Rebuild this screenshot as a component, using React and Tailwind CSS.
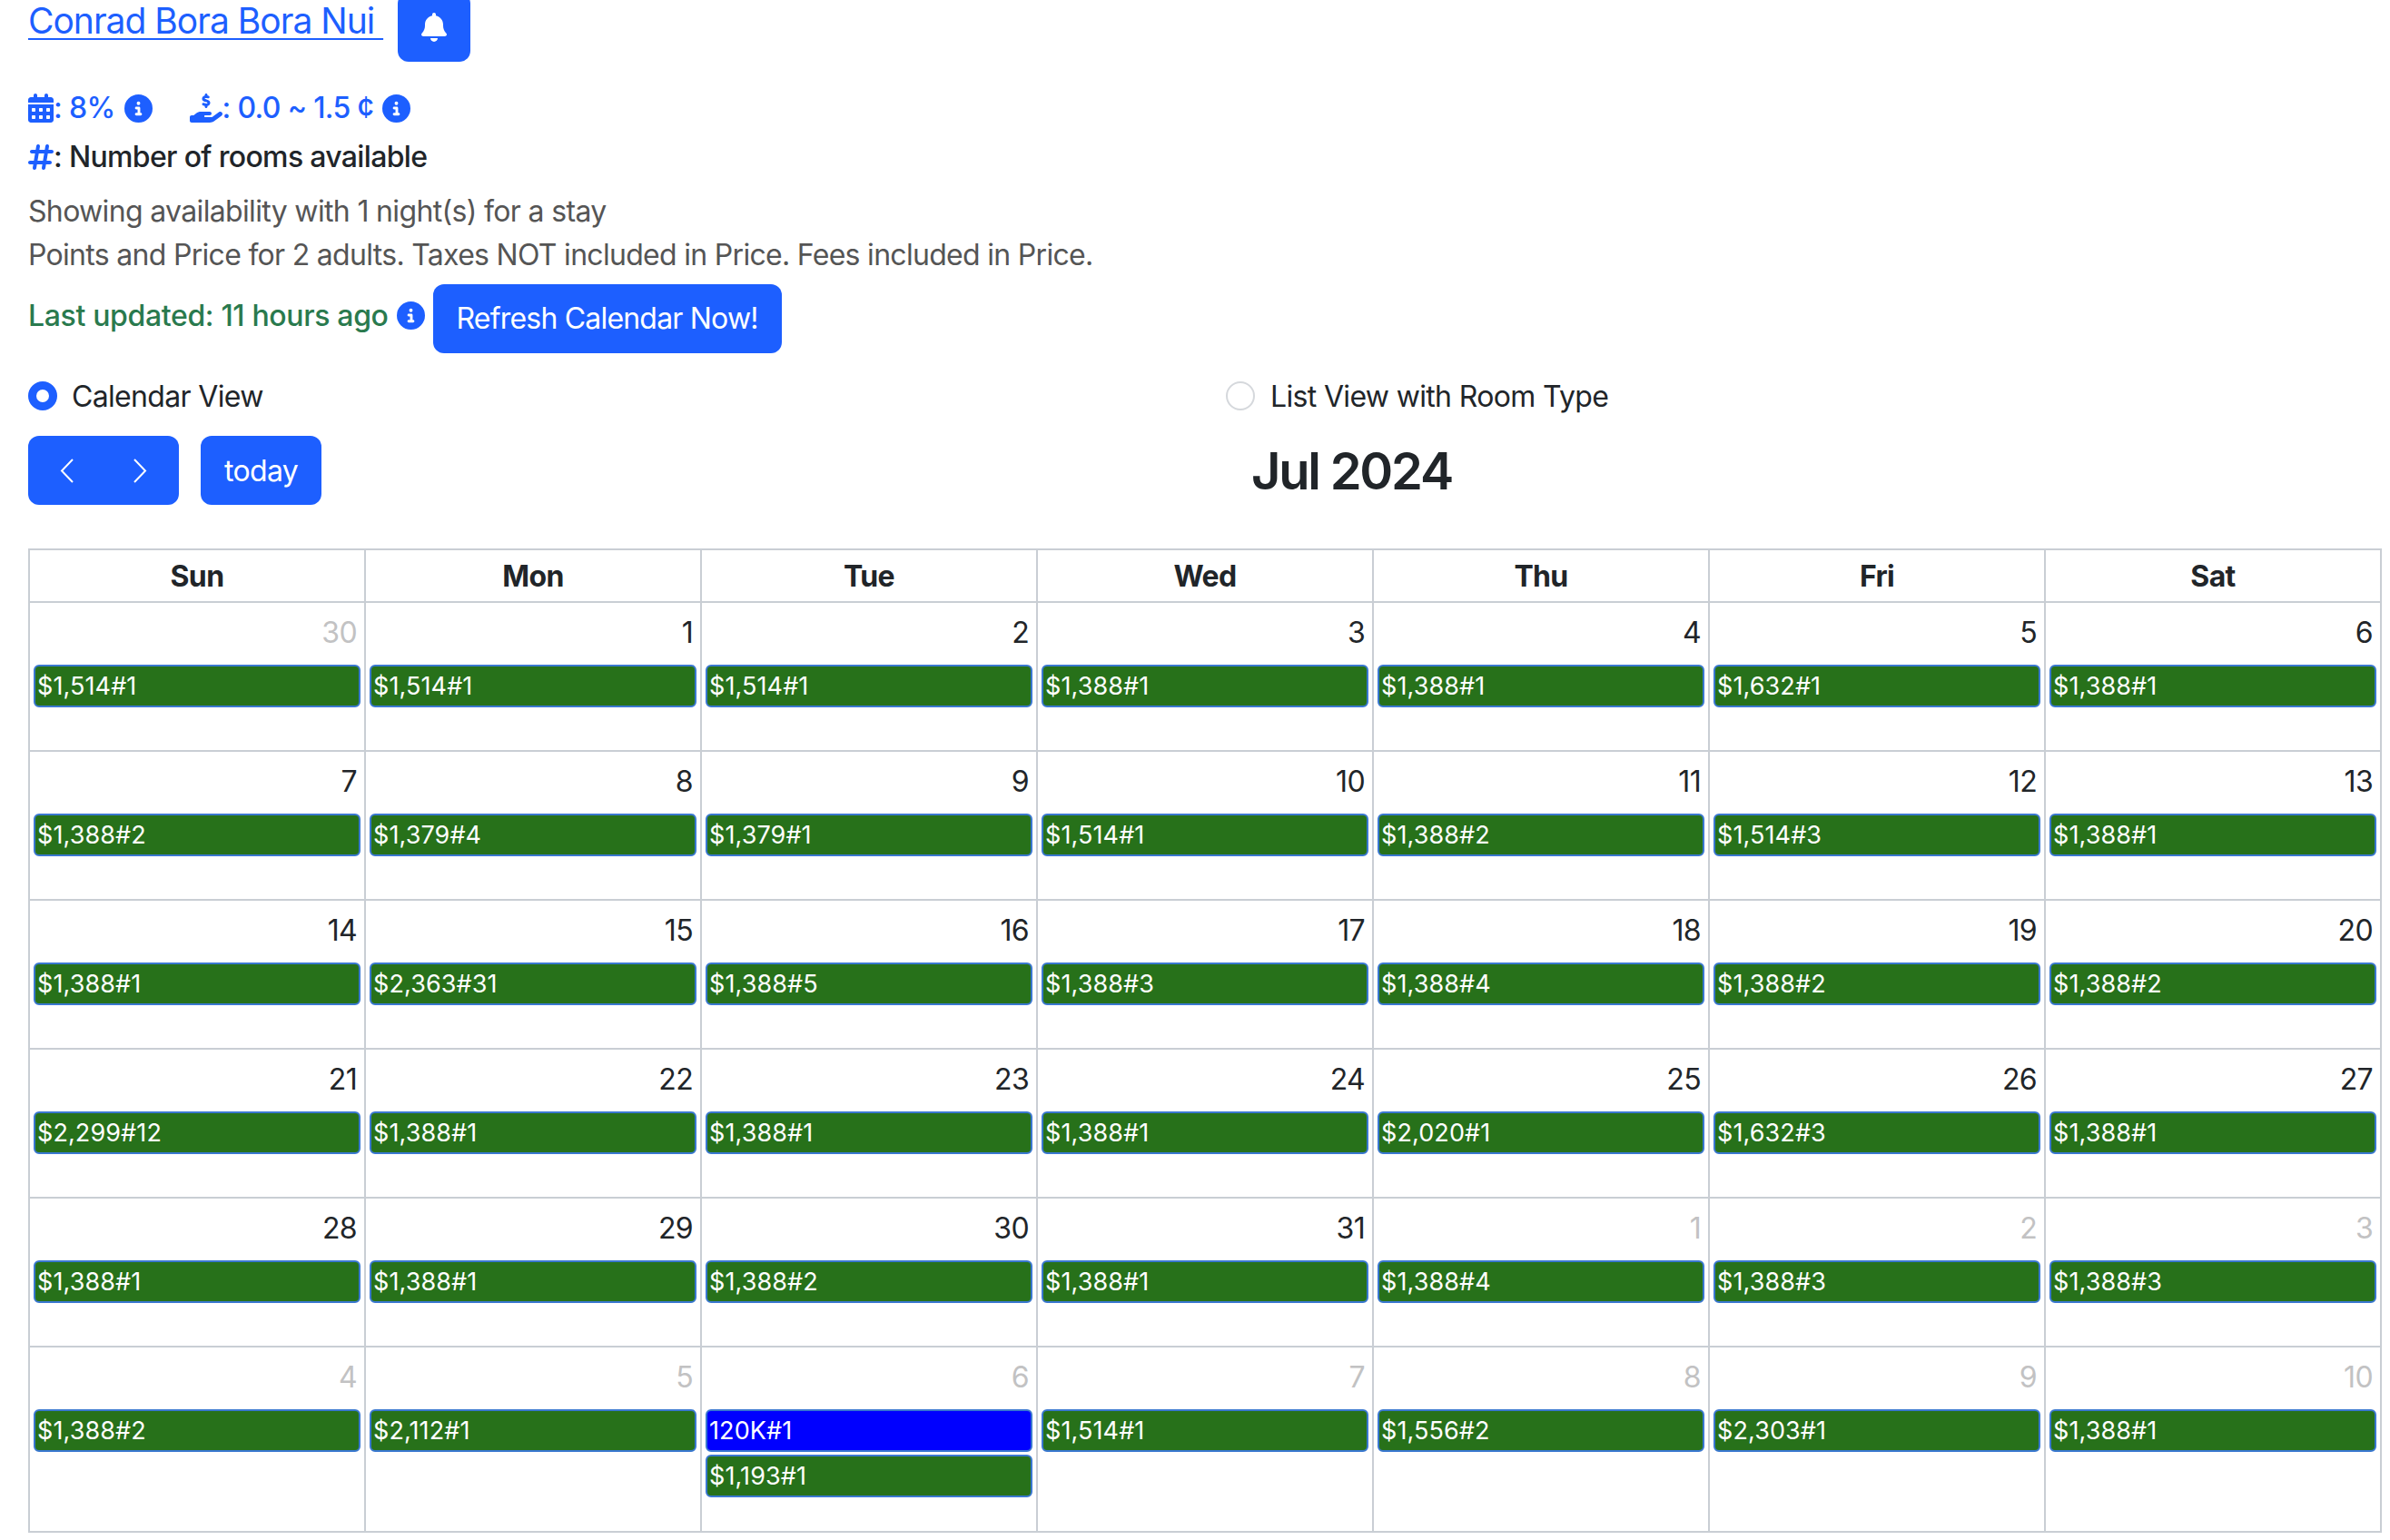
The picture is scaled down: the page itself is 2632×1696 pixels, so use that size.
import React from "react";
import { FaBell, FaCalendarDays, FaHandHoldingDollar, FaCircleInfo, FaHashtag } from "react-icons/fa6";

const BLUE = "text-[#1d5fff]";
const days = ["Sun", "Mon", "Tue", "Wed", "Thu", "Fri", "Sat"];
const cells = [
  ["30", 1, "$1,514#1"], ["1", 0, "$1,514#1"], ["2", 0, "$1,514#1"], ["3", 0, "$1,388#1"], ["4", 0, "$1,388#1"], ["5", 0, "$1,632#1"], ["6", 0, "$1,388#1"],
  ["7", 0, "$1,388#2"], ["8", 0, "$1,379#4"], ["9", 0, "$1,379#1"], ["10", 0, "$1,514#1"], ["11", 0, "$1,388#2"], ["12", 0, "$1,514#3"], ["13", 0, "$1,388#1"],
  ["14", 0, "$1,388#1"], ["15", 0, "$2,363#31"], ["16", 0, "$1,388#5"], ["17", 0, "$1,388#3"], ["18", 0, "$1,388#4"], ["19", 0, "$1,388#2"], ["20", 0, "$1,388#2"],
  ["21", 0, "$2,299#12"], ["22", 0, "$1,388#1"], ["23", 0, "$1,388#1"], ["24", 0, "$1,388#1"], ["25", 0, "$2,020#1"], ["26", 0, "$1,632#3"], ["27", 0, "$1,388#1"],
  ["28", 0, "$1,388#1"], ["29", 0, "$1,388#1"], ["30", 0, "$1,388#2"], ["31", 0, "$1,388#1"], ["1", 1, "$1,388#4"], ["2", 1, "$1,388#3"], ["3", 1, "$1,388#3"],
  ["4", 1, "$1,388#2"], ["5", 1, "$2,112#1"], ["6", 1, "120K#1", "$1,193#1"], ["7", 1, "$1,514#1"], ["8", 1, "$1,556#2"], ["9", 1, "$2,303#1"], ["10", 1, "$1,388#1"],
];

function Event({ label }) {
  const isPoints = label.endsWith("K#1");
  return (
    <div className={`h-[47px] rounded-[6px] border-2 border-[#3a78d0] pl-[2px] text-[27px] leading-[44px] tracking-[0.1px] text-white ${isPoints ? "bg-[#0000ff]" : "bg-[#27711a]"}`}>
      {label}
    </div>
  );
}

function Cell({ cell, last }) {
  const [num, muted, ...events] = cell;
  return (
    <div className={`border-r-2 border-b-2 border-[#c9ced4] ${last ? "h-[204px]" : "h-[164px]"}`}>
      <div className={`pt-[9px] pr-[8px] text-right text-[32px] leading-[48px] ${muted ? "text-[#c2c2c3]" : "text-[#212529]"}`}>{num}</div>
      <div className="mt-[11px] flex flex-col gap-[3px] pl-[4px] pr-[4px]">
        {events.map((e, i) => <Event key={i} label={e} />)}
      </div>
    </div>
  );
}

export default function App() {
  return (
    <div className="h-[1696px] overflow-hidden bg-white pl-[31px] pr-[9px] font-['Inter',sans-serif] text-[32px] leading-[48px] tracking-[-0.66px] text-[#212529]">
      <div className="-mt-[8px] flex items-start gap-[16px]">
        <a href="#" className="mt-[11px] text-[39px] leading-[40px] tracking-[-1px] text-[#1d5fff] underline decoration-[2px] underline-offset-[5px] whitespace-pre">Conrad Bora Bora Nui </a>
        <button className="flex h-[76px] w-[80px] items-center justify-center rounded-[12px] bg-[#1d5fff] text-white">
          <FaBell className="text-[32px]" />
        </button>
      </div>

      <div className={`mt-[27px] flex h-[48px] items-center font-medium ${BLUE}`}>
        <FaCalendarDays className="h-[32px] w-[28px]" />
        <span>: 8%</span>
        <FaCircleInfo className="ml-[10px] text-[31px]" />
        <FaHandHoldingDollar className="ml-[41px] h-[32px] w-[36px]" />
        <span>: 0.0 ~ 1.5 ¢</span>
        <FaCircleInfo className="ml-[10px] text-[31px]" />
      </div>

      <div className="mt-[6px] flex h-[48px] items-center font-medium">
        <FaHashtag className={`h-[32px] w-[28px] ${BLUE}`} />
        <span>: Number of rooms available</span>
      </div>

      <div className="mt-[12px] text-[#555555]">
        <div>Showing availability with 1 night(s) for a stay</div>
        <div className="tracking-[-0.7px]">Points and Price for 2 adults. Taxes NOT included in Price. Fees included in Price.</div>
      </div>

      <div className="mt-[8px] flex items-start">
        <span className="mt-[11px] font-medium tracking-[-0.35px] text-[#2a7a4e]">Last updated: 11 hours ago</span>
        <FaCircleInfo className={`ml-[9px] mt-[19px] text-[31px] ${BLUE}`} />
        <button className="ml-[9px] h-[76px] w-[384px] rounded-[12px] bg-[#1d5fff] tracking-[-0.8px] text-white">Refresh Calendar Now!</button>
      </div>

      <div className="mt-[31px] grid grid-cols-2 gap-[46px]">
        <label className="flex h-[32px] items-center gap-[16px]">
          <span className="h-[32px] w-[32px] rounded-full border-[9px] border-[#1d5fff] bg-white" />
          <span className="pt-[2px]">Calendar View</span>
        </label>
        <label className="flex h-[32px] items-center gap-[17px]">
          <span className="h-[32px] w-[32px] rounded-full border-2 border-[#d5d8dc] bg-white" />
          <span className="pt-[2px]">List View with Room Type</span>
        </label>
      </div>

      <div className="mt-[28px] flex items-center justify-between">
        <div className="flex gap-[24px]">
          <div className="flex h-[76px] w-[166px] items-center justify-between rounded-[12px] bg-[#1d5fff] px-[35px] text-white">
            <svg width="15" height="27" viewBox="0 0 15 27" fill="none" stroke="currentColor" strokeWidth="2"><polyline points="14,1 2,13.5 14,26" /></svg>
            <svg width="15" height="27" viewBox="0 0 15 27" fill="none" stroke="currentColor" strokeWidth="2"><polyline points="1,1 13,13.5 1,26" /></svg>
          </div>
          <button className="h-[76px] w-[133px] rounded-[12px] bg-[#1d5fff] pt-[2px] text-white">today</button>
        </div>
        <h2 className="pt-[2px] text-[56px] font-semibold leading-[66px] tracking-[-2.2px]">Jul 2024</h2>
        <div />
      </div>

      <div className="mt-[48px] w-[2592px] border-t-2 border-l-2 border-[#c9ced4]">
        <div className="grid grid-cols-[repeat(7,370px)]">
          {days.map((d) => (
            <div key={d} className="flex h-[58px] items-center justify-center border-r-2 border-b-2 border-[#c9ced4] pt-[2px] font-bold">{d}</div>
          ))}
          {cells.map((c, i) => <Cell key={i} cell={c} last={i >= 35} />)}
        </div>
      </div>
    </div>
  );
}
